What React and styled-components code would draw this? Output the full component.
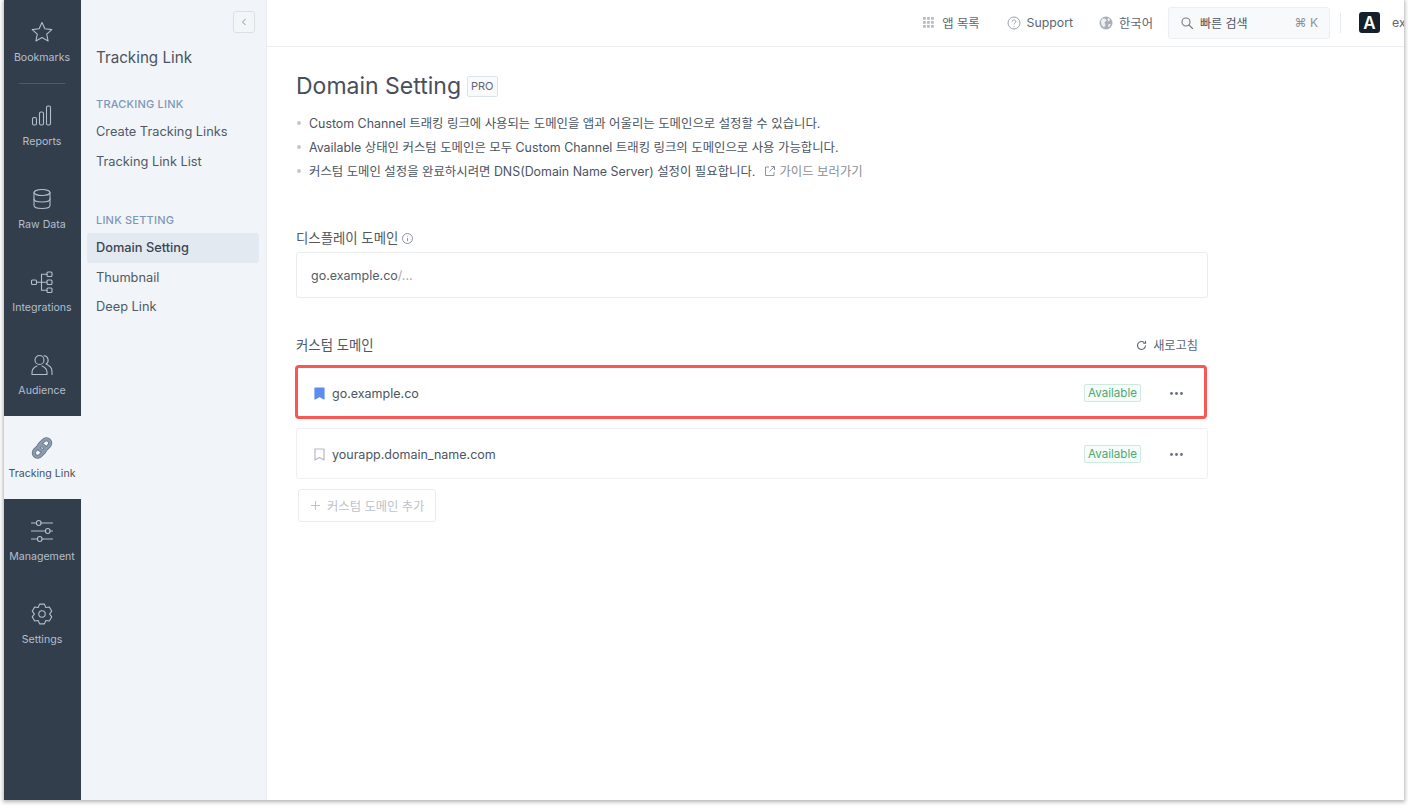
import React from "react";
import styled, { createGlobalStyle } from "styled-components";

const Global = createGlobalStyle`
  html, body { margin: 0; padding: 0; height: 100%; background: #fff; overflow: hidden; }
  body { font-family: Inter, "Noto Sans CJK KR", sans-serif; color: #4a5361; }
  * { box-sizing: border-box; }
  svg { display: block; flex: none; }
`;

const Page = styled.div`
  width: 1408px;
  height: 808px;
  padding: 0 4px 8px;
  background: #fff;
`;
const Win = styled.div`
  width: 1400px;
  height: 800px;
  display: flex;
  background: #fff;
  overflow: hidden;
  box-shadow: 0 1px 4px 1px rgba(0, 0, 0, 0.3);
`;
const Rail = styled.nav`
  width: 77px;
  flex: none;
  background: #323e4c;
  display: flex;
  flex-direction: column;
`;
const RailItem = styled.div`
  height: 83px;
  flex: none;
  display: flex;
  flex-direction: column;
  align-items: center;
  padding: 20px 1px 0 0;
  gap: 7px;
  font-size: 10.6px;
  line-height: 14px;
  background: ${(p) => (p.$active ? "#f1f5f9" : "transparent")};
  color: ${(p) => (p.$active ? "#465160" : "#b4bfcd")};
  white-space: nowrap;
`;
const RailDivider = styled.div`
  width: 47px;
  height: 1px;
  background: #4d5a6a;
  margin: 0 auto;
  flex: none;
  transform: translateX(-0.5px);
`;
const Side = styled.aside`
  width: 186px;
  flex: none;
  background: #f1f5f9;
  border-right: 1px solid #e8ebf0;
  display: flex;
  flex-direction: column;
  padding: 0 7px 0 6px;
`;
const CollapseRow = styled.div`
  display: flex;
  justify-content: flex-end;
  padding: 11px 4px 0 0;
  height: 47px;
`;
const CollapseBtn = styled.button`
  width: 22px;
  height: 22px;
  padding: 0;
  border: 1px solid #dbe0e6;
  border-radius: 3px;
  background: #f3f6f9;
  display: flex;
  align-items: center;
  justify-content: center;
`;
const SideTitle = styled.div`
  font-size: 15.2px;
  line-height: 22px;
  color: #4a5361;
  padding-left: 9px;
  margin-bottom: 28px;
`;
const SideHeading = styled.div`
  font-size: 11px;
  line-height: 14px;
  font-weight: 500;
  letter-spacing: 0.2px;
  color: #7d97b8;
  padding-left: 9px;
  margin-bottom: 6px;
`;
const SideLink = styled.div`
  height: 29.5px;
  display: flex;
  align-items: center;
  padding-left: 9px;
  font-size: 12.8px;
  border-radius: 3px;
  font-weight: ${(p) => (p.$active ? 500 : 400)};
  background: ${(p) => (p.$active ? "#e3e9f0" : "transparent")};
  color: ${(p) => (p.$active ? "#3a4553" : "#4f5966")};
`;
const SideGroup = styled.div`
  margin-bottom: ${(p) => p.$mb || 0}px;
`;
const Main = styled.div`
  flex: 1;
  min-width: 0;
  display: flex;
  flex-direction: column;
`;
const TopBar = styled.header`
  height: 47px;
  flex: none;
  border-bottom: 1px solid #eceef1;
  display: flex;
  align-items: center;
  justify-content: flex-end;
  font-size: 12.3px;
  color: #5d6672;
  overflow: hidden;
  padding-bottom: 1px;
`;
const TopItem = styled.div`
  display: flex;
  align-items: center;
  gap: 6px;
  margin-right: ${(p) => p.$mr}px;
  white-space: nowrap;
`;
const Search = styled.div`
  width: 162px;
  height: 32px;
  border: 1px solid #eceef1;
  border-radius: 3px;
  background: #f7f9fb;
  display: flex;
  align-items: center;
  padding: 0 11px;
  gap: 6px;
  font-size: 12px;
  color: #4d5663;
`;
const Kbd = styled.span`
  margin-left: auto;
  color: #8b93a0;
  font-size: 12px;
`;
const TopDivider = styled.div`
  width: 1px;
  height: 20px;
  background: #e6e9ed;
  margin: 0 18px 0 10px;
`;
const Avatar = styled.div`
  width: 21px;
  height: 21px;
  border-radius: 3px;
  background: #14202e;
  color: #fff;
  font-size: 17px;
  font-weight: 600;
  display: flex;
  align-items: center;
  justify-content: center;
  margin-right: 12px;
`;
const UserName = styled.div`
  width: 12px;
  overflow: hidden;
  white-space: nowrap;
  color: #5d6672;
`;
const Content = styled.main`
  padding: 24px 0 0 29px;
  width: 941px;
`;
const TitleRow = styled.div`
  display: flex;
  align-items: center;
  gap: 6px;
  height: 30px;
  margin-bottom: 10px;
`;
const Title = styled.h1`
  margin: 0;
  font-size: 23px;
  line-height: 30px;
  font-weight: 400;
  color: #484f5a;
`;
const ProBadge = styled.span`
  font-size: 11px;
  line-height: 19px;
  padding: 0 3px;
  border: 1px solid #dde3ea;
  border-radius: 2px;
  color: #5f6874;
  background: #f9fafc;
`;
const Notes = styled.ul`
  list-style: none;
  margin: 0 0 45px;
  padding: 0;
`;
const Note = styled.li`
  display: flex;
  align-items: center;
  height: 24px;
  font-size: 12.4px;
  color: #4b5461;
  white-space: nowrap;
  &::before {
    content: "";
    width: 4px;
    height: 4px;
    border-radius: 50%;
    background: #c3c8cf;
    margin: 0 8px 0 1px;
  }
`;
const Guide = styled.span`
  display: inline-flex;
  align-items: center;
  gap: 3px;
  color: #8a8f96;
  margin-left: 9px;
`;
const FieldLabel = styled.div`
  display: flex;
  align-items: center;
  gap: 3px;
  font-size: 13.4px;
  line-height: 20px;
  color: #4f5763;
  margin-bottom: ${(p) => p.$mb}px;
`;
const DisplayBox = styled.div`
  height: 46px;
  border: 1px solid #e9ecf0;
  border-radius: 3px;
  display: flex;
  align-items: center;
  padding: 1px 0 0 14px;
  font-size: 12.5px;
  color: #535c68;
  margin-bottom: 37px;
`;
const Faint = styled.span`
  color: #a3aab4;
`;
const HeaderRow = styled.div`
  display: flex;
  align-items: center;
  justify-content: space-between;
  height: 20px;
  margin-bottom: 12px;
  padding-right: 10px;
`;
const Refresh = styled.span`
  display: flex;
  align-items: center;
  gap: 6px;
  font-size: 12.2px;
  color: #5d6672;
`;
const DomainRow = styled.div`
  height: ${(p) => (p.$hl ? 50 : 51)}px;
  display: flex;
  align-items: center;
  padding: ${(p) => (p.$hl ? 2 : 1)}px 24px 0 17px;
  border-radius: 3px;
  font-size: 12.5px;
  color: #4c5562;
  background: #fff;
  border: 1px solid ${(p) => (p.$hl ? "transparent" : "#eef0f3")};
  margin-bottom: ${(p) => (p.$hl ? 11 : 10)}px;
  position: relative;
`;
const Highlight = styled.span`
  position: absolute;
  top: -3px;
  bottom: -3px;
  left: -2.5px;
  right: 0.5px;
  border: 3px solid #f95656;
  border-radius: 4px;
  pointer-events: none;
`;
const DomainName = styled.span`
  margin-left: 7px;
  flex: 1;
`;
const Status = styled.span`
  font-size: 11.6px;
  line-height: 16px;
  padding: 0 3px;
  border: 1px solid #cdeadf;
  border-radius: 2px;
  background: #f6fcf9;
  color: #4da873;
  margin-right: 29px;
`;
const AddBtn = styled.button`
  display: flex;
  align-items: center;
  justify-content: flex-start;
  gap: 7px;
  height: 33px;
  width: 138px;
  margin: 0 0 0 2px;
  padding: 0 12px;
  background: #fff;
  border: 1px solid #e8ebef;
  border-radius: 3px;
  font: inherit;
  font-size: 12.3px;
  color: #bcc2ca;
  white-space: nowrap;
`;

const S = { fill: "none", stroke: "currentColor", strokeLinecap: "round", strokeLinejoin: "round" };
const Ico = ({ size = 24, vb = 24, sw = 1.1, children, ...r }) => (
  <svg width={size} height={size} viewBox={`0 0 ${vb} ${vb}`} {...S} strokeWidth={sw} {...r}>{children}</svg>
);

const gearPath = () => {
  const pts = [];
  for (let i = 0; i < 6; i++) {
    const a = (i * Math.PI) / 3 - Math.PI / 2;
    [[-0.5, 7.7], [-0.24, 10.2], [0.24, 10.2], [0.5, 7.7]].forEach(([d, r]) => {
      pts.push(`${(12 + r * Math.cos(a + d)).toFixed(2)} ${(12 + r * Math.sin(a + d)).toFixed(2)}`);
    });
  }
  return `M${pts.join("L")}Z`;
};

const linkLoops = (
  <>
    <rect x="8" y="5.200" width="13" height="7.600" rx="3.800" transform="rotate(-45 14.500 9)" />
    <rect x="3" y="11.200" width="13" height="7.600" rx="3.800" transform="rotate(-45 9.500 15)" />
  </>
);

const icons = {
  star: <Ico><path d="M12 2.500l2.900 6.300 6.900.8-5.100 4.600 1.400 6.800-6.100-3.400-6.100 3.400 1.400-6.800L2.200 9.600l6.900-.8z" /></Ico>,
  reports: <Ico><rect x="2.500" y="13.500" width="4" height="7.500" rx="1.500" /><rect x="9.500" y="8" width="4" height="13" rx="1.500" /><rect x="16.500" y="2" width="4" height="19" rx="1.500" /></Ico>,
  db: <Ico><ellipse cx="12" cy="5.500" rx="8" ry="3" /><path d="M4 5.500v13c0 1.700 3.600 3 8 3s8-1.300 8-3v-13" /><path d="M4 12c0 1.700 3.600 3 8 3s8-1.300 8-3" /></Ico>,
  tree: <Ico><rect x="1.500" y="10" width="5" height="4.500" rx="1" /><rect x="17" y="2" width="5" height="4.500" rx="1" /><rect x="17" y="10" width="5" height="4.500" rx="1" /><rect x="17" y="18" width="5" height="4.500" rx="1" /><path d="M6.500 12.200H17M11.500 4.200v16M11.500 4.200H17M11.500 20.200H17" /></Ico>,
  people: <Ico><circle cx="9.500" cy="7" r="4.500" /><path d="M2 21.500v-2c0-3 2.500-5.500 5-6.500M12 13c2.500 1 5 3.500 5 6.500v2H2" /><path d="M14 2.700a4.500 4.500 0 0 1 2 8.300c3 1.200 6 4.200 6 7.500v3" /></Ico>,
  sliders: <Ico><path d="M1.500 4h5M11 4h11.500M1.500 12h14M20 12h2.500M1.500 20h6M12 20h10.500" /><rect x="6.500" y="1.500" width="4.500" height="5" rx="2.200" /><rect x="15.500" y="9.500" width="4.500" height="5" rx="2.200" /><rect x="7.500" y="17.500" width="4.500" height="5" rx="2.200" /></Ico>,
  gear: <Ico><circle cx="12" cy="12" r="3.200" /><path d={gearPath()} /></Ico>,
  link: (
    <svg width="24" height="24" viewBox="0 0 24 24" fill="none">
      <g stroke="#5f6b7b" strokeWidth="4">{linkLoops}</g>
      <g stroke="#8d9bb0" strokeWidth="2.600">{linkLoops}</g>
    </svg>
  ),
};

const railItems = [
  ["reports", "Reports"],
  ["db", "Raw Data"],
  ["tree", "Integrations"],
  ["people", "Audience"],
  ["link", "Tracking Link", true],
  ["sliders", "Management"],
  ["gear", "Settings"],
];

const Bookmark = ({ filled }) => (
  <svg width="11" height="13" viewBox="0 0 11 13" fill={filled ? "#5b8def" : "none"} stroke={filled ? "#5b8def" : "#b3b9c2"} strokeWidth="1.200" strokeLinejoin="round">
    <path d="M1 1h9v11L5.500 9.500 1 12z" />
  </svg>
);
const Dots = () => (
  <svg width="13" height="3" viewBox="0 0 13 3" fill="#666e79">
    <circle cx="1.500" cy="1.500" r="1.400" /><circle cx="6.500" cy="1.500" r="1.400" /><circle cx="11.500" cy="1.500" r="1.400" />
  </svg>
);

export default function App() {
  return (
    <Page>
      <Global />
      <Win>
        <Rail>
          <RailItem>{icons.star}<span>Bookmarks</span></RailItem>
          <RailDivider />
          {railItems.map(([ic, label, active]) => (
            <RailItem key={label} $active={active}>
              {icons[ic]}
              <span>{label}</span>
            </RailItem>
          ))}
        </Rail>
        <Side>
          <CollapseRow>
            <CollapseBtn>
              <svg width="8" height="8" viewBox="0 0 8 8" fill="none" stroke="#8b94a1" strokeWidth="1"><path d="M5.500 1L2.500 4l3 3" /></svg>
            </CollapseBtn>
          </CollapseRow>
          <SideTitle>Tracking Link</SideTitle>
          <SideGroup $mb={37}>
            <SideHeading>TRACKING LINK</SideHeading>
            <SideLink>Create Tracking Links</SideLink>
            <SideLink>Tracking Link List</SideLink>
          </SideGroup>
          <SideGroup>
            <SideHeading>LINK SETTING</SideHeading>
            <SideLink $active>Domain Setting</SideLink>
            <SideLink>Thumbnail</SideLink>
            <SideLink>Deep Link</SideLink>
          </SideGroup>
        </Side>
        <Main>
          <TopBar>
            <TopItem $mr={27}>
              <svg width="14" height="13" viewBox="0 0 14 13" fill="#b5bbc4">
                {[1, 5, 9].flatMap((y) => [1, 5, 9].map((x) => <rect key={`${x}-${y}`} x={x} y={y} width="2.800" height="2.800" rx=".5" />))}
              </svg>
              앱 목록
            </TopItem>
            <TopItem $mr={26}>
              <svg width="14" height="14" viewBox="0 0 14 14" fill="none" stroke="#9aa1ab" strokeWidth="1">
                <circle cx="7" cy="7" r="6" /><path d="M5.300 5.500a1.700 1.700 0 1 1 2.600 1.500c-.6.400-.9.700-.9 1.400" /><path d="M7 10v.6" />
              </svg>
              Support
            </TopItem>
            <TopItem $mr={15}>
              <svg width="14" height="14" viewBox="0 0 14 14">
                <circle cx="7" cy="7" r="6.500" fill="#a9afb8" />
                <path d="M3.500 2.500l3 .3 1 2-2 1.500 1 3-1.500 2.200L2.500 9l-.7-4zM9.200 1.800l2 1.800L10 5.500 8.500 4zM11.800 8l-1.800 3.500-1-1.500.8-2z" fill="#eef0f3" />
              </svg>
              한국어
            </TopItem>
            <Search>
              <svg width="14" height="14" viewBox="0 0 14 14" fill="none" stroke="#727a86" strokeWidth="1.100">
                <circle cx="6" cy="6" r="4" /><path d="M9 9l3.500 3.500" strokeLinecap="round" />
              </svg>
              빠른 검색
              <Kbd>⌘ K</Kbd>
            </Search>
            <TopDivider />
            <Avatar>A</Avatar>
            <UserName>example</UserName>
          </TopBar>
          <Content>
            <TitleRow>
              <Title>Domain Setting</Title>
              <ProBadge>PRO</ProBadge>
            </TitleRow>
            <Notes>
              <Note>Custom Channel 트래킹 링크에 사용되는 도메인을 앱과 어울리는 도메인으로 설정할 수 있습니다.</Note>
              <Note>Available 상태인 커스텀 도메인은 모두 Custom Channel 트래킹 링크의 도메인으로 사용 가능합니다.</Note>
              <Note>
                커스텀 도메인 설정을 완료하시려면 DNS(Domain Name Server) 설정이 필요합니다.
                <Guide>
                  <svg width="12" height="12" viewBox="0 0 12 12" fill="none" stroke="#8d949f" strokeWidth="1"><path d="M5 2H1.500v8.500H10V7M7 1.500h3.500V5M10.500 1.500L5.500 6.500" /></svg>
                  가이드 보러가기
                </Guide>
              </Note>
            </Notes>
            <FieldLabel $mb={4}>
              디스플레이 도메인
              <svg width="13" height="13" viewBox="0 0 13 13" fill="none" stroke="#8d949f" strokeWidth="1"><circle cx="6.500" cy="6.500" r="5" /><path d="M6.500 6v3M6.500 4v.6" /></svg>
            </FieldLabel>
            <DisplayBox>go.example.co<Faint>/...</Faint></DisplayBox>
            <HeaderRow>
              <FieldLabel $mb={0}>커스텀 도메인</FieldLabel>
              <Refresh>
                <svg width="11" height="11" viewBox="0 0 11 11" fill="none" stroke="#5d6672" strokeWidth="1.100"><path d="M9.500 5.500a4 4 0 1 1-1.200-2.900" /><path d="M9.500 1v2.200H7.300" /></svg>
                새로고침
              </Refresh>
            </HeaderRow>
            <DomainRow $hl>
              <Bookmark filled />
              <DomainName>go.example.co</DomainName>
              <Status>Available</Status>
              <Dots />
              <Highlight />
            </DomainRow>
            <DomainRow>
              <Bookmark />
              <DomainName>yourapp.domain_name.com</DomainName>
              <Status>Available</Status>
              <Dots />
            </DomainRow>
            <AddBtn>
              <svg width="9" height="9" viewBox="0 0 9 9" fill="none" stroke="#bcc2ca" strokeWidth="1"><path d="M4.500 0v9M0 4.500h9" /></svg>
              커스텀 도메인 추가
            </AddBtn>
          </Content>
        </Main>
      </Win>
    </Page>
  );
}
